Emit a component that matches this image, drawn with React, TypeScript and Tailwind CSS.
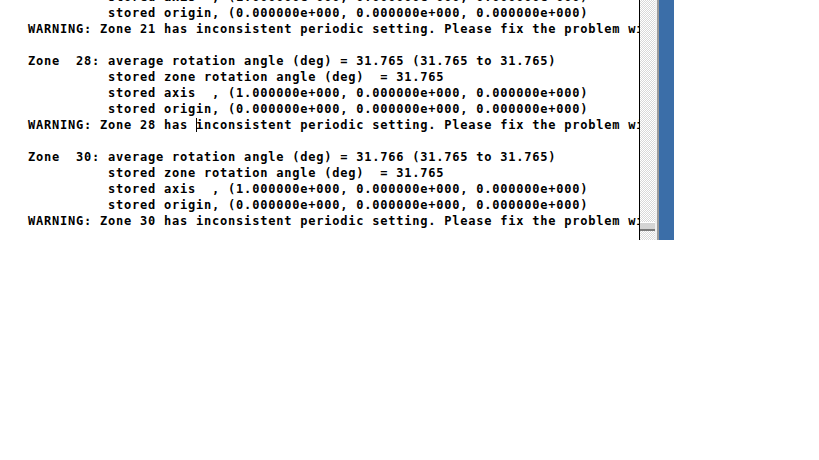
import React from "react";

const lines: string[] = [
  "          stored axis  , (1.000000e+000, 0.000000e+000, 0.000000e+000)",
  "          stored origin, (0.000000e+000, 0.000000e+000, 0.000000e+000)",
  "WARNING: Zone 21 has inconsistent periodic setting. Please fix the problem with the zone.",
  "",
  "Zone  28: average rotation angle (deg) = 31.765 (31.765 to 31.765)",
  "          stored zone rotation angle (deg)  = 31.765",
  "          stored axis  , (1.000000e+000, 0.000000e+000, 0.000000e+000)",
  "          stored origin, (0.000000e+000, 0.000000e+000, 0.000000e+000)",
  "WARNING: Zone 28 has inconsistent periodic setting. Please fix the problem with the zone.",
  "",
  "Zone  30: average rotation angle (deg) = 31.766 (31.765 to 31.765)",
  "          stored zone rotation angle (deg)  = 31.765",
  "          stored axis  , (1.000000e+000, 0.000000e+000, 0.000000e+000)",
  "          stored origin, (0.000000e+000, 0.000000e+000, 0.000000e+000)",
  "WARNING: Zone 30 has inconsistent periodic setting. Please fix the problem with the zone.",
];

export default function App() {
  return (
    <div className="w-[819px] h-[460px] bg-white overflow-hidden">
      <div className="flex h-[240px]">
        <div className="relative w-[640px] h-full overflow-hidden bg-white border-r border-black pl-[28px]">
          <div
            className="-mt-[11px] whitespace-pre text-black font-bold text-[12px] leading-[16px] tracking-[0.78px]"
            style={{ fontFamily: '"DejaVu Sans Mono", "Liberation Mono", monospace' }}
          >
            {lines.map((l, i) => (
              <div key={i} className="h-[16px] relative">
                {l === "" ? "\u00a0" : l}
                {i === 8 && (
                  <span className="absolute left-[168px] top-[1px] w-px h-[14px] bg-black" />
                )}
              </div>
            ))}
          </div>
        </div>
        <div className="w-[15px] h-full flex flex-col bg-[repeating-conic-gradient(#d8d8d8_0_25%,#ffffff_0_50%)] bg-[length:2px_2px]">
          <div className="h-[222px]" />
          <div className="h-[9px] bg-[#d4d4d4] border-b-2 border-[#7a7a7a] border-t border-t-white" />
        </div>
        <div className="w-[2px] h-full bg-[#f0f0f0]" />
        <div className="w-[2px] h-full bg-[#9a9a9a]" />
        <div className="w-[15px] h-full bg-[#3b6ea8]" />
      </div>
    </div>
  );
}
